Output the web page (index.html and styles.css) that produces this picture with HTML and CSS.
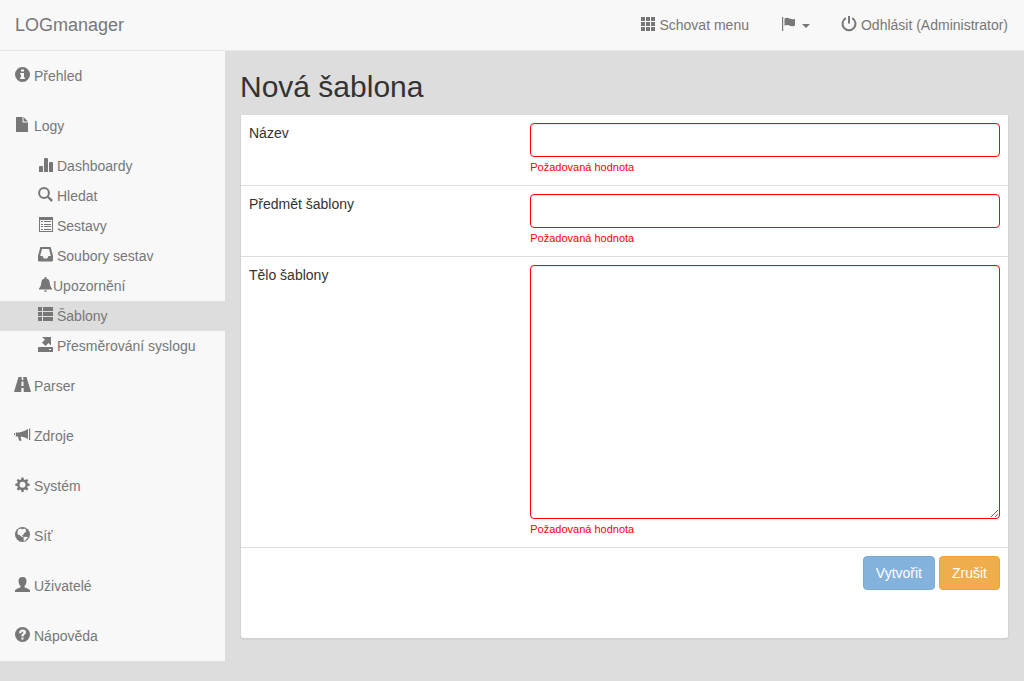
FILE: index.html
```html
<!DOCTYPE html>
<html lang="cs">
<head>
<meta charset="utf-8">
<meta name="viewport" content="width=device-width, initial-scale=1">
<title>LOGmanager</title>
<link rel="stylesheet" href="styles.css">
</head>
<body>
<header class="navbar">
  <a class="brand" href="#">LOGmanager</a>
  <nav class="top-links">
    <a class="top-link" href="#"><svg class="icon" viewBox="0 0 15 15"><path d="M1 0h4v4H1zM6 0h4v4H6zM11 0h4v4h-4zM1 5h4v4H1zM6 5h4v4H6zM11 5h4v4h-4zM1 10h4v4H1zM6 10h4v4H6zM11 10h4v4h-4z"/></svg>Schovat menu</a>
    <button class="top-link" type="button" aria-label="Jazyk"><svg class="icon" viewBox="0 0 15 15"><path d="M1 0h1.200v14H1zM3.500 1.500c2-1.300 3.500-.9 5 0s3.300 1.200 5.500 .2v6.800c-2.200 1.200-3.800 1-5.500 .1s-3.200-.9-5 0z"/></svg><span class="caret"></span></button>
    <a class="top-link" href="#"><svg class="icon" viewBox="0 0 15 15"><path d="M6-1h2v7.500H6z"/><path class="stroke" d="M3.800 1.100a6.500 6.500 0 1 0 6.400 0"/></svg>Odhlásit (Administrator)</a>
  </nav>
</header>
<div class="layout">
  <nav class="sidebar">
    <a class="item" href="#"><svg class="icon" viewBox="0 0 15 15"><path fill-rule="evenodd" d="M7.500 0a7.500 7.500 0 1 0 0 15a7.500 7.500 0 1 0 0-15zM6 2.500h3v2H6zM5 6h4v4.500h1V12H5v-1.500h1v-3H5z"/></svg>Přehled</a>
    <a class="item" href="#"><svg class="icon" viewBox="0 0 15 15"><path d="M1 0h6.500v5.500H13V15H1zM8.500 0L13 4.500H8.500z"/></svg>Logy</a>
    <div class="submenu">
      <a class="item" href="#"><svg class="icon" viewBox="0 0 15 15"><path d="M1 10q0-1 1-1h2q1 0 1 1V15H1zM6 2q0-1 1-1h2q1 0 1 1v13H6zM11 6q0-1 1-1h2q1 0 1 1v9h-4z"/></svg>Dashboardy</a>
      <a class="item" href="#"><svg class="icon" viewBox="0 0 15 15"><circle class="stroke" cx="6" cy="6" r="4.900"/><path d="M9 10.500L10.500 9l4.500 4-1.700 2z"/></svg>Hledat</a>
      <a class="item" href="#"><svg class="icon" viewBox="0 0 15 15"><path fill-rule="evenodd" d="M1 0h14v15H1zM2 3v11h12V3zM3 4h2v1H3zM6 4h7v1H6zM3 7h2v1H3zM6 7h7v1H6zM3 9h2v1H3zM6 9h7v1H6zM3 12h2v1H3zM6 12h7v1H6z"/></svg>Sestavy</a>
      <a class="item" href="#"><svg class="icon" viewBox="0 0 15 15"><path fill-rule="evenodd" d="M2.300 0h10.400L15 9v4.500q0 1-1 1H1q-1 0-1-1V9zM4 2L2.200 9H4.500l1.300 2.500h3.400L10.500 9h2.300L11 2z"/></svg>Soubory sestav</a>
      <a class="item tight" href="#"><svg class="icon" viewBox="0 0 15 15"><path d="M6.600 0h1.800v1.500q3 .7 3.300 4c.3 3 .8 4.500 2.300 6v.9H1v-.9c1.500-1.500 2-3 2.300-6q.3-3.300 3.300-4zM5.800 13.600h3.400q-.5 1.400-1.700 1.400t-1.700-1.400z"/></svg>Upozornění</a>
      <a class="item active" href="#"><svg class="icon" viewBox="0 0 15 15"><path d="M0 0h4v4H0zM5 0h10v4H5zM0 5h4v4H0zM5 5h10v4H5zM0 10h4v4H0zM5 10h10v4H5z"/></svg>Šablony</a>
      <a class="item" href="#"><svg class="icon" viewBox="0 0 15 15"><path fill-rule="evenodd" d="M4 0h9v8.500L10.500 6 7.500 9 4 5.500 7 2.700zM1 10h13q1 0 1 1v4H0v-4q0-1 1-1zM11 12v1h2v-1z"/></svg>Přesměrování syslogu</a>
    </div>
    <a class="item" href="#"><svg class="icon" viewBox="0 0 15 15"><path d="M3.500 0h3.200v3h1.600V0h3.200L16 15H8.700v-4H6.300v4H-1zM6.600 4.500L6.400 9h2.200l-.2-4.500z" fill-rule="evenodd"/></svg>Parser</a>
    <a class="item" href="#"><svg class="icon" viewBox="0 0 15 15"><path d="M-1 6.200h1V8h-1zM.8 5.500h3.400Q9 4.700 13 2v10Q9.500 9.800 5.500 9.500l1 4.300H4.200L2.900 9.500H.8zM14 1.500h1.200v11.500H14z"/></svg>Zdroje</a>
    <a class="item" href="#"><svg class="icon" viewBox="0 0 15 15"><path fill-rule="evenodd" d="M6.500.5h2l.4 2 1.300.5 1.700-1.100 1.400 1.400-1.100 1.700.5 1.300 2 .4v2l-2 .4-.5 1.300 1.100 1.700-1.400 1.400-1.700-1.100-1.300.5-.4 2h-2l-.4-2-1.300-.5-1.700 1.100-1.400-1.400L2.800 10.400l-.5-1.300-2-.4v-2l2-.4L2.800 5 1.700 3.300l1.400-1.400L4.800 3l1.300-.5zM7.500 4.700a3 3 0 1 0 0 6a3 3 0 1 0 0-6z"/></svg>Systém</a>
    <a class="item" href="#"><svg class="icon" viewBox="0 0 15 15"><circle cx="7.500" cy="7.500" r="7.500"/><path class="cut" d="M3.500 2.200L6 1.500l1.500.7 2-.8 1.700 1L10.500 4l1 1-1.800.5-1.200 2L7 8.500l1.500 1L7 10 4.500 8 2.700 7.500 2.400 5zM8.500 10l3.300-.3 1.200.8-2 2.300-2.200 1.400z"/></svg>Síť</a>
    <a class="item" href="#"><svg class="icon" viewBox="0 0 15 15"><path d="M7.500 0q4 0 4 4 0 3.700-2 5v1.200q4 1.600 5.500 2.800v2H0v-2q1.500-1.200 5.500-2.800V9q-2-1.300-2-5 0-4 4-4z"/></svg>Uživatelé</a>
    <a class="item" href="#"><svg class="icon" viewBox="0 0 15 15"><circle cx="7.500" cy="7.500" r="7.500"/><path class="cut" d="M6.300 10.500h2.200v2H6.300zM6.300 9.500q0-2 1-2.600t1-1.500q0-.8-.8-.8-1 0-1.200 1.600H4q.2-3.700 3.700-3.700 3.300 0 3.300 2.700 0 1.500-1.300 2.300T8.500 9.500z"/></svg>Nápověda</a>
  </nav>
  <main class="content">
    <h1 class="title">Nová šablona</h1>
    <form class="panel">
      <div class="row">
        <label for="name">Název</label>
        <div class="field"><input class="control" id="name" type="text"><span class="error">Požadovaná hodnota</span></div>
      </div>
      <div class="row">
        <label for="subject">Předmět šablony</label>
        <div class="field"><input class="control" id="subject" type="text"><span class="error">Požadovaná hodnota</span></div>
      </div>
      <div class="row">
        <label for="body">Tělo šablony</label>
        <div class="field"><textarea class="control" id="body" rows="12"></textarea><span class="error">Požadovaná hodnota</span></div>
      </div>
      <div class="actions">
        <button class="btn primary" type="submit" disabled>Vytvořit</button>
        <button class="btn warning" type="button">Zrušit</button>
      </div>
    </form>
  </main>
</div>
</body>
</html>
```
FILE: styles.css
```css
* { box-sizing: border-box; }
body {
  margin: 0;
  background: #ddd;
  color: #333;
  font: 14px/20px "Liberation Sans", Arial, sans-serif;
}
a { color: inherit; text-decoration: none; }

.navbar {
  display: flex;
  justify-content: space-between;
  align-items: center;
  min-height: 51px;
  background: #f8f8f8;
  border-bottom: 1px solid #e7e7e7;
  color: #777;
}
.brand { padding: 15px; font-size: 18px; }
.top-links { display: flex; }
.top-link {
  display: flex;
  align-items: center;
  gap: 4px;
  padding: 15px 16px;
  border: 0;
  background: none;
  color: inherit;
  font: inherit;
}
.caret {
  margin: 2px 0 0 2px;
  border: 4px solid transparent;
  border-top-color: currentColor;
  border-bottom: 0;
}

.icon {
  flex: none;
  width: 15px;
  height: 15px;
  margin-bottom: 3px;
  overflow: visible;
  fill: currentColor;
}
.top-link .icon { margin-bottom: 1px; }
.icon .stroke { fill: none; stroke: currentColor; stroke-width: 2; }
.icon .cut { fill: #f8f8f8; }

.layout { display: flex; align-items: flex-start; }
.sidebar {
  flex: none;
  width: 225px;
  background: #f8f8f8;
  color: #777;
}
.item {
  display: flex;
  align-items: center;
  gap: 4px;
  padding: 15px;
}
.submenu .item { padding: 5px 15px 5px 38px; }
.submenu .tight { gap: 0; }
.submenu .active { background: #ddd; }

.content { flex: 1; min-width: 0; padding: 20px 15px; }
.title {
  margin: 0 0 12px;
  font-size: 30px;
  font-weight: 400;
  line-height: 31px;
}
.panel {
  padding-bottom: 40px;
  background: #fff;
  background-clip: padding-box;
  border: 1px solid transparent;
  border-radius: 0 0 4px 4px;
  box-shadow: 0 1px 1px rgba(0, 0, 0, .05);
}
.row {
  display: grid;
  grid-template-columns: 11fr 19fr;
  border-bottom: 1px solid #ddd;
}
.row label, .field, .actions { padding: 8px; }
.control {
  display: block;
  width: 100%;
  height: 34px;
  padding: 6px 12px;
  border: 1px solid #f00;
  border-radius: 4px;
  background: #fff;
  box-shadow: inset 0 1px 1px rgba(0, 0, 0, .075);
  color: #555;
  font: inherit;
}
textarea.control { height: 254px; resize: vertical; }
.error { display: block; color: #f00; font-size: 11px; }

.actions { display: flex; justify-content: flex-end; gap: 4px; }
.btn {
  padding: 6px 12px;
  border: 1px solid;
  border-radius: 4px;
  color: #fff;
  font: inherit;
}
.primary { background: #428bca; border-color: #357ebd; }
.primary:disabled { opacity: .65; }
.warning { background: #f0ad4e; border-color: #eea236; }
```
